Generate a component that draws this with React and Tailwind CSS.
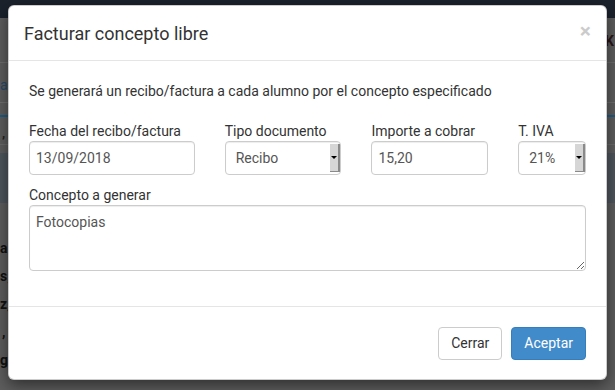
import React from "react";

const Field = ({ label, children }) => (
  <div className="flex flex-col">
    <label className="text-[14px] leading-[20px] text-[#333]">{label}</label>
    {children}
  </div>
);

const FakeSelect = ({ value }) => (
  <div className="h-[34px] flex items-stretch rounded-[4px] border border-[#ccc] bg-white shadow-[inset_0_1px_1px_rgba(0,0,0,0.075)]">
    <div className="flex-1 flex items-center pl-[10px] text-[14px] text-[#555]">{value}</div>
    <div className="w-[10px] my-[2px] bg-[#d6d6d6] border-r-2 border-b border-[#8a8a8a] flex items-center justify-center">
      <div className="w-0 h-0 border-l-[3px] border-r-[3px] border-t-[3px] border-l-transparent border-r-transparent border-t-black" />
    </div>
  </div>
);

const App = () => {
  return (
    <div className="relative w-[615px] h-[390px] overflow-hidden bg-[#5d5d5d] font-['Roboto',sans-serif]">
      {/* page behind the backdrop */}
      <div className="h-[18px] bg-[#1b222c]" />
      <div className="h-[45px] border-b border-[#6c6c6c] flex justify-end items-center">
        <span className="text-[14px] font-bold text-[#2a1414] pr-[1px] mt-[2px]">K</span>
      </div>
      <div className="h-[40px] border-b border-[#6e6e6e] flex items-center">
        <span className="text-[14px] text-[#27496a] mt-[6px]">ar</span>
      </div>
      <div className="h-[14px] border-b-2 border-[#1f5b86]" />
      <div className="h-[28px] border-b border-[#6a6a6a] flex items-center">
        <span className="text-[13px] font-bold text-[#222] ml-[2px] mt-[6px]">,</span>
      </div>
      <div className="h-[8px]" />
      <div className="h-[50px] bg-[#4e565c]" />
      <div className="flex flex-col pt-[35px] gap-[8px] text-[14px] font-bold text-[#111] leading-[20px]">
        <span>a</span>
        <span>s,</span>
        <span>z,</span>
        <span className="ml-[2px]">,</span>
        <span>g</span>
      </div>

      {/* modal */}
      <div className="absolute left-[8px] top-[5px] w-[599px] h-[375px] flex flex-col bg-white rounded-[6px] border border-black/20 shadow-[0_5px_15px_rgba(0,0,0,0.5)]">
        <div className="h-[55px] shrink-0 flex items-center justify-between px-[15px] border-b border-[#e5e5e5]">
          <h4 className="text-[18px] leading-[26px] text-[#333] mt-[2px]">Facturar concepto libre</h4>
          <span className="text-[21px] font-bold leading-none text-black opacity-20 -mt-[3px]">×</span>
        </div>

        <div className="px-[20px] pt-[20px] pb-[35px]">
          <p className="text-[14px] leading-[20px] text-[#333]">
            Se generará un recibo/factura a cada alumno por el concepto especificado
          </p>

          <div className="mt-[20px] grid grid-cols-[165.7px_116.75px_116.75px_67.8px] gap-x-[30px]">
            <Field label="Fecha del recibo/factura">
              <input
                readOnly
                value="13/09/2018"
                className="h-[34px] w-full rounded-[4px] border border-[#ccc] pl-[6px] text-[14px] text-[#555] outline-none shadow-[inset_0_1px_1px_rgba(0,0,0,0.075)]"
              />
            </Field>
            <Field label="Tipo documento">
              <FakeSelect value="Recibo" />
            </Field>
            <Field label="Importe a cobrar">
              <input
                readOnly
                value="15,20"
                className="h-[34px] w-full rounded-[4px] border border-[#ccc] pl-[6px] text-[14px] text-[#555] outline-none shadow-[inset_0_1px_1px_rgba(0,0,0,0.075)]"
              />
            </Field>
            <Field label="T. IVA">
              <FakeSelect value="21%" />
            </Field>
          </div>

          <div className="mt-[10px]">
            <Field label="Concepto a generar">
              <textarea
                readOnly
                defaultValue="Fotocopias"
                className="block h-[66px] w-full rounded-[4px] border border-[#ccc] px-[6px] pt-[6px] text-[14px] leading-[20px] text-[#555] outline-none shadow-[inset_0_1px_1px_rgba(0,0,0,0.075)]"
              />
            </Field>
          </div>
        </div>

        <div className="border-t border-[#e5e5e5] flex justify-end gap-[9px] px-[20px] pt-[20px]">
          <button className="h-[33px] px-[12px] rounded-[4px] border border-[#ccc] bg-white text-[14px] text-[#333]">
            Cerrar
          </button>
          <button className="h-[33px] px-[12px] rounded-[4px] border border-[#357ebd] bg-[#428bca] text-[14px] text-white">
            Aceptar
          </button>
        </div>
      </div>
    </div>
  );
};

export default App;
